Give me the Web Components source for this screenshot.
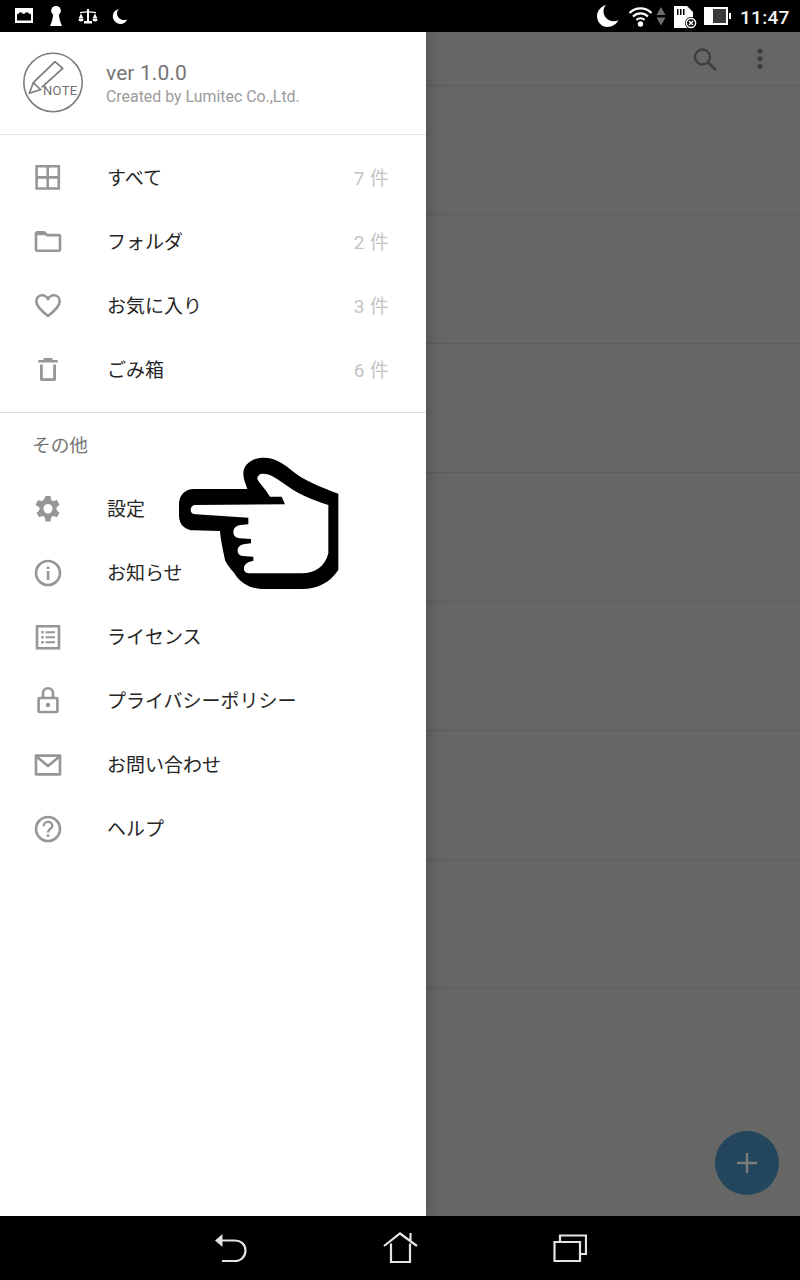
<!DOCTYPE html>
<html><head><meta charset="utf-8">
<style>
html,body{margin:0;padding:0;background:#000;}
body{width:800px;height:1280px;overflow:hidden;font-family:Roboto,"Noto Sans CJK JP",sans-serif;}
</style></head>
<body>
<app-screen>
  <status-bar slot="status"></status-bar>
  <nav-drawer slot="drawer">
    <drawer-header></drawer-header>
    <drawer-item icon="grid" count="7 件">すべて</drawer-item>
    <drawer-item icon="folder" count="2 件">フォルダ</drawer-item>
    <drawer-item icon="heart" count="3 件">お気に入り</drawer-item>
    <drawer-item icon="trash" count="6 件">ごみ箱</drawer-item>
    <drawer-section>その他</drawer-section>
    <drawer-item icon="gear">設定</drawer-item>
    <drawer-item icon="info">お知らせ</drawer-item>
    <drawer-item icon="list">ライセンス</drawer-item>
    <drawer-item icon="lock">プライバシーポリシー</drawer-item>
    <drawer-item icon="mail">お問い合わせ</drawer-item>
    <drawer-item icon="help">ヘルプ</drawer-item>
  </nav-drawer>
  <dim-content slot="content"></dim-content>
  <nav-bar slot="nav"></nav-bar>
  <pointing-hand slot="overlay"></pointing-hand>
</app-screen>
<script>
const S='fill="none" stroke="#969696" stroke-width="2.6"';
const F='fill="#969696"';
const ICON={
grid:`<path ${S} d="M2.600 2.300h22.200v22.200H2.600zM13.700 2.300v22.200M2.600 13.400h22.200"/>`,
folder:`<path ${S} stroke-linejoin="round" d="M2 5.500V21.700c0 .6.500 1.100 1.100 1.100h21.800c.6 0 1.100-.5 1.100-1.100V8.200c0-.6-.5-1.100-1.100-1.100H13L10.400 4.300H3.100c-.6 0-1.100.5-1.100 1.200z"/><path ${F} d="M2.500 4.500h8l2.700 2.700H2.500z"/>`,
heart:`<path ${S} stroke-linejoin="round" d="M14 24C6.500 18 2.300 14 2.300 9.200 2.300 5.600 5 3.300 8 3.300c2.500 0 4.700 1.300 6 3.800 1.300-2.500 3.500-3.800 6-3.800 3 0 5.700 2.300 5.700 5.900C25.700 14 21.500 18 14 24z"/>`,
trash:`<path ${F} d="M9.500 2h9v2h5.200v2.600H4.300V4h5.200z"/><path fill="none" stroke="#969696" stroke-width="2.800" stroke-linejoin="round" d="M7.400 8.500V23.600h13.200V8.500"/>`,
gear:`<path ${F} fill-rule="evenodd" transform="scale(1 1.08)" d="M11.500 1h5l.7 3.700c.8.300 1.500.7 2.100 1.200l3.600-1.200 2.500 4.300-2.900 2.500c.1.800.1 1.600 0 2.400l2.900 2.500-2.500 4.300-3.600-1.200c-.6.500-1.300.9-2.100 1.200l-.7 3.800h-5l-.7-3.800c-.8-.3-1.500-.7-2.100-1.200l-3.600 1.200-2.500-4.300 2.900-2.500c-.1-.8-.1-1.600 0-2.400L1.500 9l2.500-4.300 3.600 1.200c.6-.5 1.300-.9 2.100-1.200zM14 8.250a4.500 4.500 0 1 0 0 9a4.500 4.500 0 0 0 0-9z"/>`,
info:`<circle ${S} cx="14" cy="14" r="12"/><path ${F} d="M12.800 12h2.600v9h-2.600zM12.800 7.500h2.600v2.600h-2.600z"/>`,
list:`<path ${S} d="M3 3.300h22v22H3z"/><path ${F} d="M7.300 8h2.400v2.400H7.300zM11.500 8.200H21v2h-9.500zM7.300 13h2.400v2.400H7.300zM11.500 13.200H21v2h-9.500zM7.300 18h2.400v2.400H7.300zM11.500 18.200H21v2h-9.500z"/>`,
lock:`<path ${S} stroke-linejoin="round" d="M5.400 11h17.200a.8.800 0 0 1 .8.800V24.200a.8.800 0 0 1-.8.800H5.400a.8.800 0 0 1-.8-.8V11.800a.8.800 0 0 1 .8-.8zM9 11V6.300a5 5 0 0 1 10 0V11"/><circle cx="14" cy="18" r="2.200" ${F}/>`,
mail:`<path ${S} stroke-linejoin="round" d="M2 4.600h24v18.800H2zM2.500 5.500L14 15 25.500 5.500"/>`,
help:`<circle ${S} cx="14" cy="14" r="12"/><path fill="none" stroke="#969696" stroke-width="2.400" d="M9.700 11.300c0-2.700 1.900-4.400 4.300-4.400 2.500 0 4.300 1.700 4.300 3.900 0 3-4.300 3.300-4.300 6.700"/><path ${F} d="M12.700 19.500h2.600v2.600h-2.600z"/>`
};
function def(name,css,html,init){
  const t=document.createElement('template');
  t.innerHTML=`<style>${css}</style>${html}`;
  customElements.define(name,class extends HTMLElement{
    constructor(){super();this.attachShadow({mode:'open'}).appendChild(t.content.cloneNode(true));}
    connectedCallback(){init&&init(this,this.shadowRoot);}
  });
}
def('app-screen',`
:host{display:grid;width:800px;height:1280px;position:relative;overflow:hidden;grid-template-rows:32px 1184px 64px;grid-template-columns:426px 374px;}
::slotted([slot=status]){grid-column:1/3;grid-row:1}
::slotted([slot=drawer]){grid-column:1;grid-row:2}
::slotted([slot=content]){grid-column:2;grid-row:2}
::slotted([slot=nav]){grid-column:1/3;grid-row:3}
`,`<slot name="status"></slot><slot name="drawer"></slot><slot name="content"></slot><slot name="nav"></slot><slot name="overlay"></slot>`);

def('status-bar',`
:host{display:flex;align-items:center;justify-content:space-between;background:#000;color:#fff;height:32px;padding:0 11px 0 15px;box-sizing:border-box;position:relative;z-index:3}
.g{display:flex;align-items:center}
svg{display:block;fill:#fff;flex:none}
.t{font:500 19.200px Roboto,sans-serif;color:#f4f4f4;letter-spacing:.2px;margin-left:9px;margin-top:2px;width:49px;white-space:nowrap}
`,`<div class="g">
<svg width="18" height="15" viewBox="0 0 18 15" style="margin-top:-1px"><path fill-rule="evenodd" d="M0 0h18v15H0zM2 12.500H16V6.300C14 6.300 13.500 4.300 11.800 4.300 10.300 4.300 10 6 8.800 6 7.500 6 7 4.300 5.500 4.300 4 4.300 3.800 6.300 2 6.300z"/></svg>
<svg style="margin-left:17px" width="12" height="20" viewBox="0 0 12 20"><path d="M6 0a4.800 4.800 0 0 1 2.800 8.700C9.200 12 10.200 16 12 20H0C1.800 16 2.800 12 3.200 8.700A4.800 4.800 0 0 1 6 0z"/></svg>
<svg style="margin-left:16px" width="20" height="15" viewBox="0 0 20 15"><path d="M9 0h2v2.200l7 .8v1.300l-7-.8V12h3v2.500H6V12h3V3.500l-7 .8V3l7-.8z"/><path d="M3 4.500L5.500 9.500H.5zM17 4.500l2.500 5h-5z"/><path d="M.5 10h5a2.500 2.500 0 0 1-5 0zM14.500 10h5a2.500 2.500 0 0 1-5 0z"/></svg>
<svg style="margin-left:14px" width="16" height="17" viewBox="0 0 19 19"><path d="M8 .5C4 1.500 1 4.800 1 9.300c0 5 4 9 9 9 3.700 0 6.800-2.100 8-5.300-1 .5-2.300.7-3.500.7C9.500 13.700 6 10 6 5.500 6 3.600 6.800 1.800 8 .5z"/></svg>
</div>
<div class="g">
<svg width="22" height="24" viewBox="0 0 22 24"><path d="M9 1C4.400 2.200 0 6.500 0 12c0 6.200 4.700 11 10.500 11 4.600 0 8.700-2.700 10.900-6.700-1.300.7-2.900 1-4.400 1-6.200 0-10.500-4.500-10.500-10C6.500 4.800 7.500 2.700 9 1z"/></svg>
<svg style="margin-left:9px" width="25" height="21" viewBox="0 0 25 21"><g fill="none" stroke="#fff" stroke-width="2.200"><path d="M1.500 7a15.500 15.500 0 0 1 22 0"/><path d="M5 10.500a10.500 10.500 0 0 1 15 0"/><path d="M8.500 14a5.500 5.500 0 0 1 8 0"/></g><circle cx="12.500" cy="18" r="2.700"/></svg>
<svg style="margin-left:3px" width="10" height="19" viewBox="0 0 10 19"><path fill="#6e6e6e" d="M5 0l4.500 8H.5zM.5 10.500h9L5 18.500z"/></svg>
<svg style="margin-left:8px;margin-top:2px" width="23" height="23" viewBox="0 0 23 23"><path d="M0 0h13l6 6v16H0z"/><path fill="#000" d="M3 3h1.500v6H3zM6 3h1.500v6H6zM9 3h1.500v6H9z"/><circle cx="17" cy="17" r="6" fill="#000"/><circle cx="17" cy="17" r="4.600" fill="none" stroke="#fff" stroke-width="1.500"/><path d="M15 15l4 4M19 15l-4 4" stroke="#fff" stroke-width="1.600"/></svg>
<svg style="margin-left:7px" width="27" height="18" viewBox="0 0 27 18"><path d="M0 0h24v18H0z"/><path d="M25 6h2v6h-2z"/><path fill="#3a3a3a" d="M9 2h13v14H9z"/></svg>
<span class="t">11:47</span>
</div>`);

def('nav-drawer',`
:host{display:flex;flex-direction:column;background:#fff;position:relative;z-index:2;box-shadow:0 0 14px rgba(0,0,0,.3);}
`,`<slot></slot>`);

def('drawer-header',`
:host{display:flex;align-items:center;height:103px;box-sizing:border-box;border-bottom:1px solid #e3e3e3;padding:0 0 0 22px;margin-bottom:11px;flex:none}
svg{display:block;flex:none}
.tx{margin-left:22px;display:flex;flex-direction:column;}
.a{font:400 21px/26px Roboto,sans-serif;color:#757575;letter-spacing:.1px}
.b{font:400 15.900px/21px Roboto,sans-serif;color:#9b9b9b}
`,`<svg width="62" height="62" viewBox="0 0 62 62">
<circle cx="31" cy="30.500" r="29.200" fill="none" stroke="#7c7c7c" stroke-width="1.600"/>
<path d="M19.700 35.300L40.700 16.300 33 9.700 11.300 30.700 7.300 41.300 19.700 37.300M11.300 30.700L18 37" fill="none" stroke="#7c7c7c" stroke-width="1.700" stroke-linejoin="round"/>
<text x="21" y="43" font-family="Roboto,sans-serif" font-size="13" fill="#6f6f6f" letter-spacing=".3">NOTE</text>
</svg>
<div class="tx"><span class="a">ver 1.0.0</span><span class="b">Created by Lumitec Co.,Ltd.</span></div>`);

def('drawer-item',`
:host{display:flex;align-items:center;height:64px;flex:none;padding:0 37px 0 34px;color:#262626;font:400 19px "Noto Sans CJK JP",sans-serif;}
svg{display:block;flex:none;margin-right:45px}
.l{flex:1;display:block;white-space:nowrap;margin-bottom:3px}
.c{color:#c4c4c4;font:400 19px Roboto,"Noto Sans CJK JP",sans-serif;letter-spacing:.3px;margin-bottom:3px}
`,`<svg id="i" width="28" height="28" viewBox="0 0 28 28"></svg><span class="l"><slot></slot></span><span class="c" id="c"></span>`,
(h,r)=>{r.getElementById('i').innerHTML=ICON[h.getAttribute('icon')]||'';r.getElementById('c').textContent=h.getAttribute('count')||'';});

def('drawer-section',`
:host{display:flex;align-items:center;height:65px;flex:none;box-sizing:border-box;border-top:1px solid #dedede;margin-top:10px;padding:0 0 3px 32px;color:#757575;font:400 18.700px "Noto Sans CJK JP",sans-serif;}
`,`<slot></slot>`);

def('dim-content',`
:host{display:block;background:#666;position:relative;overflow:hidden;}
.bar{height:54px;box-sizing:border-box;border-bottom:1px solid #5c5c5c;display:flex;align-items:center;justify-content:flex-end;padding:0 37px 0 0}
.row{height:129px;box-sizing:border-box;border-bottom:1px solid #5c5c5c}
.fab{position:absolute;left:289px;top:1099px;width:64px;height:64px;border-radius:50%;background:#24465c;display:flex;align-items:center;justify-content:center}
svg{display:block}
`,`<div class="bar">
<svg width="26" height="26" viewBox="0 0 26 26" style="margin-right:39px"><circle cx="10.500" cy="11" r="7.500" fill="none" stroke="#3e3e3e" stroke-width="2.300"/><path d="M16 16.500L24 24" stroke="#3e3e3e" stroke-width="2.800"/></svg>
<svg width="6" height="22" viewBox="0 0 6 22"><circle cx="3" cy="3.200" r="2.500" fill="#3c3c3c"/><circle cx="3" cy="10.800" r="2.500" fill="#3c3c3c"/><circle cx="3" cy="18.500" r="2.500" fill="#3c3c3c"/></svg>
</div>
<div class="row"></div><div class="row"></div><div class="row"></div><div class="row"></div><div class="row"></div><div class="row"></div><div class="row"></div>
<div class="fab"><svg width="20" height="20" viewBox="0 0 20 20"><path d="M10 0v20M0 10h20" stroke="#7c7c7c" stroke-width="2.400"/></svg></div>`);

def('nav-bar',`
:host{display:flex;background:#000;height:64px;position:relative;z-index:3;align-items:flex-start;padding:16px 0 0 214px;box-sizing:border-box}
svg{display:block;fill:none;stroke:#e4e4e4;stroke-width:2.200;flex:none}
`,`<svg width="33" height="32" viewBox="0 0 33 32"><path d="M8 8.500h13c5.500 0 10.500 3.500 10.500 10 0 6.500-5 10.500-10.500 10.500H8"/><path fill="#e4e4e4" stroke="none" d="M1 8.500L8.500 2V15z"/></svg>
<svg style="margin-left:136px" width="35" height="32" viewBox="0 0 35 32"><path d="M1 14L17 1.500 34 14M8 11.500V30H27V11.500M27.500 1V9"/></svg>
<svg style="margin-left:134px;margin-top:1px" width="35" height="30" viewBox="0 0 35 30"><path d="M8 9V2.500H34V21H29"/><path d="M2.500 9H28V28H2.500z"/></svg>`);

def('pointing-hand',`
:host{position:absolute;left:170px;top:445px;width:169px;height:155px;z-index:5;overflow:hidden;display:block}
svg{display:block}
`,`<svg width="180" height="155" viewBox="0 0 540 465">
<path fill="#000" d="M505 146 C450 125 400 105 370 80 C340 55 315 38 282 38 C245 38 220 60 220 85 C220 105 228 118 232 132 L72 132 C45 132 27 150 27 178 L27 212 C27 238 45 256 72 256 L150 258 C152 285 158 310 165 345 C175 368 190 378 198 392 C215 415 240 432 285 432 L395 432 C445 432 480 412 505 375 Z"/>
<path fill="#fff" d="M62 195 C62 186 68 180 78 180 L345 178 L335 155 L300 155 C285 130 268 115 262 102 C262 92 268 86 280 86 C300 86 320 100 340 115 C380 145 425 165 475 180 L475 325 C465 365 435 385 395 385 L240 385 C228 385 220 378 222 368 C224 355 235 350 250 347 L250 335 L218 333 C208 332 203 325 203 317 C203 306 212 298 225 297 L243 295 L243 282 L208 280 C196 278 190 272 190 262 C190 250 198 241 212 240 L235 238 L235 218 L78 208 C68 208 62 203 62 195 Z"/>
</svg>`);
</script>
</body></html>
